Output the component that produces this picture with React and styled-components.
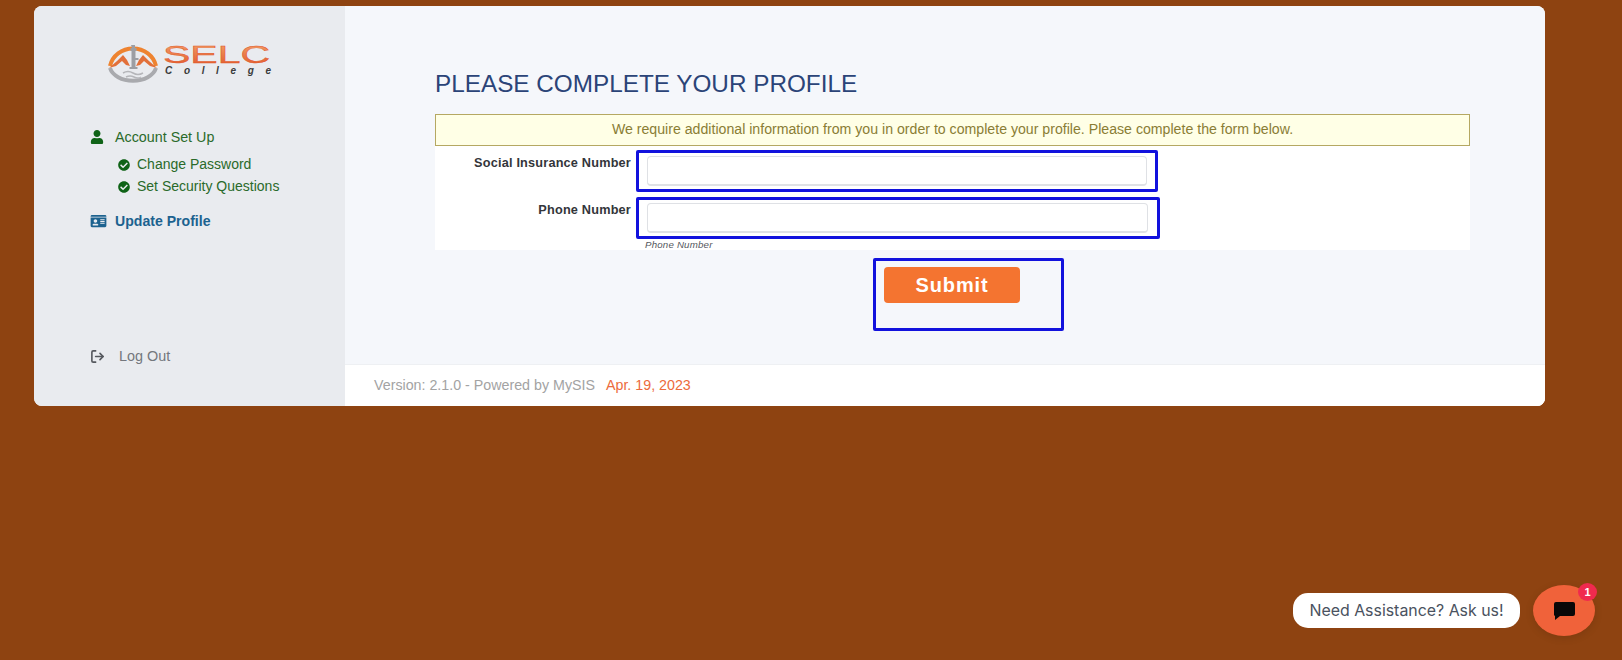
import React from 'react';
import styled, { createGlobalStyle } from 'styled-components';
import { FaUser, FaCheckCircle, FaIdCard } from 'react-icons/fa';
import { FiLogOut } from 'react-icons/fi';

const GlobalStyle = createGlobalStyle`
    html, body {
        margin: 0;
        height: 100%;
        overflow: hidden;
        background: #8e4311;
        font-family: "Liberation Sans", Arial, sans-serif;
    }
`;

const Page = styled.div`
    padding: 6px 0 0 34px;
`;

const Card = styled.div`
    display: flex;
    width: 1511px;
    height: 400px;
    border-radius: 8px;
    overflow: hidden;
    background: #fff;
`;

const Sidebar = styled.aside`
    display: flex;
    flex-direction: column;
    width: 311px;
    flex-shrink: 0;
    padding: 34px 0 0 56px;
    box-sizing: border-box;
    background: #e9ebef;
`;

const LogoWrap = styled.div`
    margin: 0 0 0 17px;
    height: 46px;
`;

const Nav = styled.nav`
    margin-top: 42px;
    display: flex;
    flex-direction: column;
`;

const NavItem = styled.div`
    display: flex;
    align-items: center;
    height: 18px;
    font-size: ${({ $active }) => ($active ? 14.1 : 14.3)}px;
    color: ${({ $active }) => ($active ? '#1c628f' : '#2a6a2a')};
    font-weight: ${({ $active }) => ($active ? 700 : 400)};
    margin-top: ${({ $top }) => $top || 0}px;

    svg {
        flex-shrink: 0;
        width: ${({ $iconWidth }) => $iconWidth || 14}px;
        height: 14px;
        margin-right: ${({ $iconGap }) => $iconGap || 11}px;
        color: ${({ $active }) => ($active ? '#1c628f' : '#0f6317')};
    }
`;

const SubItem = styled.div`
    display: flex;
    align-items: center;
    height: 18px;
    margin: ${({ $top }) => $top || 0}px 0 0 28px;
    font-size: 14px;
    color: #2a6a2a;

    svg {
        width: 12px;
        height: 12px;
        margin: 2px 7px 0 0;
        color: #0f6317;
    }
`;

const LogOut = styled.div`
    display: flex;
    align-items: center;
    margin-top: 118px;
    font-size: 14.4px;
    color: #74777d;

    svg {
        width: 15px;
        height: 15px;
        margin-right: 14px;
        color: #55585e;
        stroke-width: 2.6;
    }
`;

const Main = styled.main`
    display: flex;
    flex-direction: column;
    flex: 1;
    background: #f5f7fb;
`;

const Content = styled.div`
    flex: 1;
    padding: 64px 75px 0 90px;
`;

const Title = styled.h1`
    margin: 0;
    height: 28px;
    line-height: 28px;
    font-size: 24.3px;
    font-weight: 400;
    color: #2b4478;
`;

const Alert = styled.div`
    margin: 16px 0 0 0;
    height: 32px;
    box-sizing: border-box;
    border: 1px solid #b5a862;
    background: #ffffe6;
    text-align: center;
    line-height: 28px;
    font-size: 14.15px;
    color: #8a7d35;
`;

const FormCard = styled.div`
    display: grid;
    grid-template-columns: 196px 1fr;
    column-gap: 5px;
    row-gap: 5px;
    height: 104px;
    box-sizing: border-box;
    padding-top: 4px;
    align-content: start;
    background: #fff;
`;

const Label = styled.label`
    padding-top: 6px;
    text-align: right;
    font-size: 12.7px;
    font-weight: 700;
    letter-spacing: 0.2px;
    color: #33353a;
`;

const Field = styled.div`
    position: relative;
    display: flex;
    align-items: center;
    box-sizing: border-box;
    width: ${({ $width }) => $width}px;
    height: 42px;
    padding: 0 8px;
    border: 3px solid #1212dd;
    border-radius: 2px;
`;

const Input = styled.input`
    width: 501px;
    height: 30px;
    box-sizing: border-box;
    border: 1px solid #dfe1e5;
    border-bottom-width: 2px;
    border-radius: 4px;
    background: #fff;
`;

const Hint = styled.span`
    position: absolute;
    left: 6px;
    top: 39px;
    font-size: 9.7px;
    font-style: italic;
    letter-spacing: 0.2px;
    white-space: nowrap;
    color: #55585e;
`;

const SubmitBox = styled.div`
    box-sizing: border-box;
    width: 191px;
    height: 73px;
    margin: 8px 0 0 438px;
    padding: 6px 0 0 8px;
    border: 3px solid #1212dd;
    border-radius: 2px;
`;

const SubmitButton = styled.button`
    width: 136px;
    height: 36px;
    padding: 0;
    border: none;
    border-radius: 4px;
    background: #f47430;
    color: #fff;
    font-family: inherit;
    font-size: 20px;
    font-weight: 700;
    letter-spacing: 0.9px;
`;

const Footer = styled.footer`
    display: flex;
    align-items: center;
    gap: 11px;
    height: 42px;
    box-sizing: border-box;
    padding: 0 0 2px 29px;
    border-top: 1px solid #eef0f3;
    background: #fff;
    font-size: 14.25px;
    color: #a3a3a3;
`;

const DateText = styled.span`
    color: #ec6b3c;
`;

const Chat = styled.div`
    position: fixed;
    left: 1293px;
    top: 585px;
    display: flex;
    align-items: center;
    gap: 13px;
`;

const Bubble = styled.div`
    display: flex;
    align-items: center;
    justify-content: center;
    width: 227px;
    height: 35px;
    border-radius: 15px;
    background: #fff;
    color: #4a5260;
    font-family: Inter, sans-serif;
    font-size: 15.9px;
`;

const ChatButton = styled.div`
    position: relative;
    display: flex;
    align-items: center;
    justify-content: center;
    width: 62px;
    height: 51px;
    border-radius: 50%;
    background: #f0623a;
    box-shadow: 0 2px 8px rgba(0, 0, 0, 0.12);
`;

const Badge = styled.span`
    position: absolute;
    right: -2px;
    top: -2px;
    width: 19px;
    height: 18px;
    border-radius: 50%;
    background: #f02a4e;
    color: #fff;
    font-size: 11px;
    font-weight: 700;
    line-height: 18px;
    text-align: center;
`;

const Logo = () => (
    <svg width="170" height="46" viewBox="0 0 170 46">
        <defs>
            <linearGradient id="selc" x1="0" y1="0" x2="0" y2="1">
                <stop offset="0" stopColor="#f5a56a" />
                <stop offset="1" stopColor="#e0552a" />
            </linearGradient>
        </defs>
        {/* ring */}
        <path d="M3 26 A23.5 22 0 0 1 49 26" fill="none" stroke="#ee8330" strokeWidth="4" />
        <path d="M3 28 A23.5 16 0 0 0 49 28" fill="none" stroke="#a9aaae" strokeWidth="4" />
        {/* mountains */}
        <path d="M2 28 L10 21 L16 15 L20 20 L23 26 L19 25 L15 21 L9 26 Z" fill="#e2703a" />
        <path d="M50 28 L42 21 L36 15 L32 20 L29 26 L33 25 L37 21 L43 26 Z" fill="#e2703a" />
        {/* tower */}
        <path d="M24 5 h4 v3 h1.500 v3 h-1 v7 h3 v2 h-3 v7 h2 v2 h-8 v-2 h2 v-16 h-1 v-3 h1.500 z" fill="#9c9ea3" />
        <path d="M16 33 q5 -3 10 0 t10 0 M19 37 q4 -2 8 0 t7 0" fill="none" stroke="#b5b6ba" strokeWidth="1.500" />
        <text x="56" y="23" fontFamily="Liberation Sans, sans-serif" fontSize="24" fill="url(#selc)" stroke="#e0552a" strokeWidth="0.4" textLength="107" lengthAdjust="spacingAndGlyphs">SELC</text>
        <text x="58" y="34" fontFamily="Liberation Sans, sans-serif" fontSize="10" fontStyle="italic" fontWeight="700" fill="#3c3c3c" textLength="106" lengthAdjust="spacing">College</text>
    </svg>
);

const ChatIcon = () => (
    <svg width="21" height="18" viewBox="0 0 21 18">
        <path d="M2 0 H19 a2 2 0 0 1 2 2 V12 a2 2 0 0 1 -2 2 H6 L1 18 V14 a2 2 0 0 1 -1 -2 V2 a2 2 0 0 1 2 -2 z" fill="#080808" />
    </svg>
);

const App = () => {
    return (
        <Page>
            <GlobalStyle />
            <Card>
                <Sidebar>
                    <LogoWrap><Logo /></LogoWrap>
                    <Nav>
                        <NavItem><FaUser />Account Set Up</NavItem>
                        <SubItem $top={9}><FaCheckCircle />Change Password</SubItem>
                        <SubItem $top={4}><FaCheckCircle />Set Security Questions</SubItem>
                        <NavItem $active $top={17} $iconWidth={17} $iconGap={8}><FaIdCard />Update Profile</NavItem>
                    </Nav>
                    <LogOut><FiLogOut />Log Out</LogOut>
                </Sidebar>
                <Main>
                    <Content>
                        <Title>PLEASE COMPLETE YOUR PROFILE</Title>
                        <Alert>We require additional information from you in order to complete your profile. Please complete the form below.</Alert>
                        <FormCard>
                            <Label>Social Insurance Number</Label>
                            <Field $width={522}><Input /></Field>
                            <Label>Phone Number</Label>
                            <Field $width={524}>
                                <Input />
                                <Hint>Phone Number</Hint>
                            </Field>
                        </FormCard>
                        <SubmitBox>
                            <SubmitButton>Submit</SubmitButton>
                        </SubmitBox>
                    </Content>
                    <Footer>
                        <span>Version: 2.1.0 - Powered by MySIS</span>
                        <DateText>Apr. 19, 2023</DateText>
                    </Footer>
                </Main>
            </Card>
            <Chat>
                <Bubble>Need Assistance? Ask us!</Bubble>
                <ChatButton>
                    <ChatIcon />
                    <Badge>1</Badge>
                </ChatButton>
            </Chat>
        </Page>
    );
};

export default App;
